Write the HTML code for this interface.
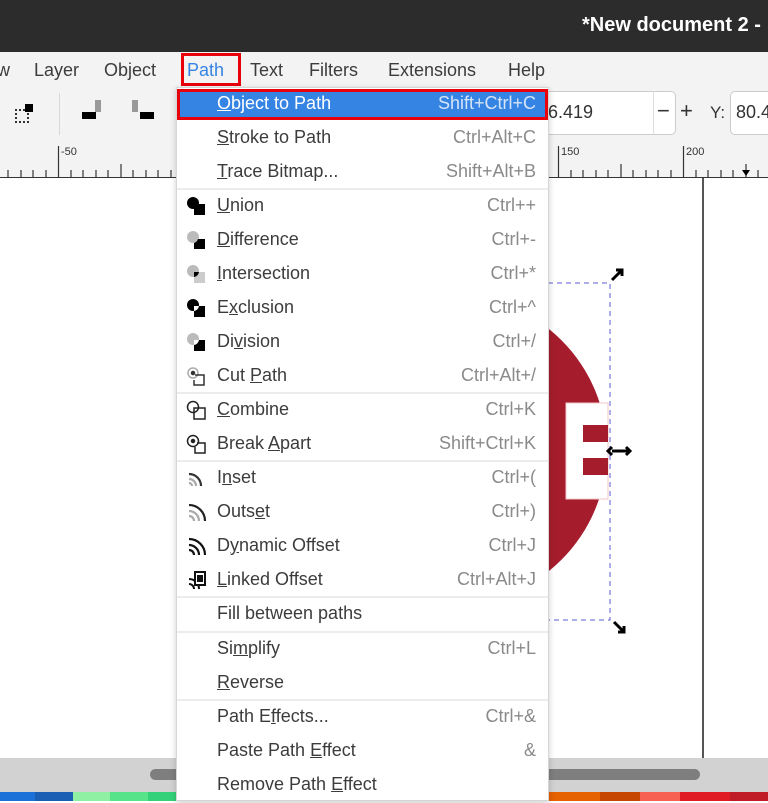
<!DOCTYPE html>
<html><head><meta charset="utf-8"><style>
*{margin:0;padding:0;box-sizing:border-box}
body{width:768px;height:801px;overflow:hidden;position:relative;background:#fff;font-family:"Liberation Sans",sans-serif}
.abs{position:absolute}
#title{left:0;top:0;width:768px;height:52px;background:#2c2c2c}
#title span{position:absolute;left:582px;top:14px;color:#fff;font-weight:bold;font-size:20px;white-space:nowrap}
#menubar{left:0;top:52px;width:768px;height:36px;background:#f3f3f3}
#menubar span{position:absolute;top:8px;font-size:18px;color:#3c3c3c}
#toolbar{left:0;top:88px;width:768px;height:52px;background:#f3f3f3}
#ruler{left:0;top:140px;width:768px;height:38px;background:#f3f3f3;border-bottom:1px solid #333}
.menu{left:176px;top:87px;width:373px;height:714px;background:#fff;border:1px solid #d6d6d6;box-shadow:0 2px 6px rgba(0,0,0,.2)}
.it{position:absolute;left:0;width:371px;height:34px;font-size:18px;color:#3c3c3c}
.it .l{position:absolute;left:40px;top:5px;white-space:nowrap}
.it .r{position:absolute;right:12px;top:5px;color:#8a8a8a;white-space:nowrap}
.it u{text-decoration:underline}
.sep{position:absolute;left:0;width:371px;height:2px;background:#ececec}
.ic{position:absolute;left:9px;top:6px;width:22px;height:22px}
</style></head><body>
<div id="title" class="abs"><span>*New document 2 -</span></div>
<div id="menubar" class="abs">
<span style="left:-3px">w</span><span style="left:34px">Layer</span><span style="left:104px">Object</span>
<span style="left:187px;color:#3584e4">Path</span><span style="left:250px">Text</span><span style="left:309px">Filters</span><span style="left:388px">Extensions</span><span style="left:508px">Help</span>
</div>
<div class="abs" style="left:181px;top:53px;width:60px;height:33px;border:3px solid #e8000b"></div>
<div id="toolbar" class="abs">
<div class="abs" style="left:15px;top:21px;width:14px;height:14px;border:2px dotted #333"></div>
<div class="abs" style="left:25px;top:16px;width:8px;height:8px;background:#000"></div>
<div class="abs" style="left:59px;top:5px;width:1px;height:42px;background:#d8d8d8"></div>
<div class="abs" style="left:95px;top:12px;width:6px;height:12px;background:#999"></div>
<div class="abs" style="left:82px;top:24px;width:14px;height:7px;background:#000"></div>
<div class="abs" style="left:132px;top:12px;width:6px;height:12px;background:#999"></div>
<div class="abs" style="left:140px;top:24px;width:14px;height:7px;background:#000"></div>
<div class="abs" style="left:540px;top:3px;width:136px;height:44px;background:#fff;border:1px solid #ccc;border-radius:5px"></div>
<span class="abs" style="left:548px;top:14px;font-size:18px;color:#333">6.419</span>
<div class="abs" style="left:653px;top:3px;width:1px;height:44px;background:#ddd"></div>
<span class="abs" style="left:657px;top:10px;font-size:22px;color:#333">−</span>
<span class="abs" style="left:680px;top:10px;font-size:22px;color:#333">+</span>
<span class="abs" style="left:710px;top:15px;font-size:17px;color:#333">Y:</span>
<div class="abs" style="left:730px;top:3px;width:50px;height:44px;background:#fff;border:1px solid #ccc;border-radius:5px"></div>
<span class="abs" style="left:736px;top:14px;font-size:18px;color:#333">80.4</span>
</div>
<div id="ruler" class="abs">
<svg width="768" height="38" class="abs" style="left:0;top:0">
<g stroke="#333" stroke-width="1.2">
<line x1="58.5" y1="6" x2="58.5" y2="37"/><line x1="558.5" y1="6" x2="558.5" y2="37"/><line x1="683.5" y1="6" x2="683.5" y2="37"/>
<line x1="8" y1="30" x2="8" y2="37"/><line x1="21" y1="30" x2="21" y2="37"/><line x1="33" y1="30" x2="33" y2="37"/><line x1="46" y1="30" x2="46" y2="37"/>
<line x1="71" y1="30" x2="71" y2="37"/><line x1="83" y1="30" x2="83" y2="37"/><line x1="96" y1="30" x2="96" y2="37"/><line x1="108" y1="30" x2="108" y2="37"/><line x1="121" y1="24" x2="121" y2="37"/><line x1="133" y1="30" x2="133" y2="37"/><line x1="146" y1="30" x2="146" y2="37"/><line x1="158" y1="30" x2="158" y2="37"/><line x1="171" y1="30" x2="171" y2="37"/>
<line x1="571" y1="30" x2="571" y2="37"/><line x1="583" y1="30" x2="583" y2="37"/><line x1="596" y1="30" x2="596" y2="37"/><line x1="608" y1="30" x2="608" y2="37"/><line x1="621" y1="24" x2="621" y2="37"/><line x1="633" y1="30" x2="633" y2="37"/><line x1="646" y1="30" x2="646" y2="37"/><line x1="658" y1="30" x2="658" y2="37"/><line x1="671" y1="30" x2="671" y2="37"/>
<line x1="696" y1="30" x2="696" y2="37"/><line x1="708" y1="30" x2="708" y2="37"/><line x1="721" y1="30" x2="721" y2="37"/><line x1="733" y1="30" x2="733" y2="37"/><line x1="746" y1="24" x2="746" y2="37"/><line x1="758" y1="30" x2="758" y2="37"/>
</g>
<g font-size="11" fill="#333" font-family="Liberation Sans"><text x="61" y="15">-50</text><text x="561" y="15">150</text><text x="686" y="15">200</text></g>
<polygon points="742,30 750,30 746,36" fill="#000"/>
</svg>
</div>
<svg class="abs" style="left:0;top:178px" width="768" height="580">
<circle cx="452" cy="272" r="155" fill="#a51d2d"/>
<rect x="548" y="225" width="20" height="96" fill="#a51d2d"/>
<rect x="566" y="225" width="42" height="96" fill="#fff" stroke="#f4c7c7"/>
<rect x="583" y="247" width="25" height="17" fill="#a51d2d"/>
<rect x="583" y="280" width="25" height="17" fill="#a51d2d"/>
<rect x="548" y="105" width="62" height="337" fill="none" stroke="#5b5bd6" stroke-dasharray="5,4"/>
<line x1="703" y1="0" x2="703" y2="580" stroke="#555" stroke-width="2"/>
<path d="M612 102 l10 -10 m-6 0 h6 v6" stroke="#000" stroke-width="3" fill="none"/>
<path d="M612 273 h18 m-4 -4 l4 4 -4 4 m-14 -8 l-4 4 4 4" stroke="#000" stroke-width="3" fill="none"/>
<path d="M614 444 l10 10 m0 -6 v6 h-6" stroke="#000" stroke-width="3" fill="none"/>
</svg>
<div class="abs" style="left:0;top:758px;width:768px;height:34px;background:#d2d2d2"></div>
<div class="abs" style="left:150px;top:769px;width:550px;height:11px;background:#7e7e7e;border-radius:6px"></div>
<div class="abs" style="left:0;top:792px;width:768px;height:9px;background:linear-gradient(90deg,#1c71d8 0 35px,#1a5fb4 35px 73px,#8ff0a4 73px 110px,#57e389 110px 148px,#33d17a 148px 176px,#fff 176px 549px,#e66100 549px 600px,#c64600 600px 640px,#f66151 640px 680px,#e01b24 680px 730px,#c01c28 730px)"></div>

<div class="menu abs">
<div class="abs" style="left:0;top:1px;width:371px;height:31px;background:#3584e4;border:3px solid #e8000b"></div>
<div class="it" style="top:0"><span class="l" style="color:#fff"><u>O</u>bject to Path</span><span class="r" style="color:#d6e4f7">Shift+Ctrl+C</span></div>
<div class="it" style="top:34px"><span class="l"><u>S</u>troke to Path</span><span class="r">Ctrl+Alt+C</span></div>
<div class="it" style="top:68px"><span class="l"><u>T</u>race Bitmap...</span><span class="r">Shift+Alt+B</span></div>
<div class="sep" style="top:100px"></div>
<div class="it" style="top:102px"><svg class="ic" viewBox="0 0 22 22"><circle cx="7" cy="7" r="6"/><rect x="8" y="8" width="11" height="11"/></svg><span class="l"><u>U</u>nion</span><span class="r">Ctrl++</span></div>
<div class="it" style="top:136px"><svg class="ic" viewBox="0 0 22 22"><circle cx="7" cy="7" r="6" fill="#bbb"/><path d="M12 9h7v10H8v-6a6 6 0 0 0 4-4z"/></svg><span class="l"><u>D</u>ifference</span><span class="r">Ctrl+-</span></div>
<div class="it" style="top:170px"><svg class="ic" viewBox="0 0 22 22"><circle cx="7" cy="7" r="6" fill="#bbb"/><rect x="8" y="8" width="11" height="11" fill="#ccc"/><path d="M8 8h5a6 6 0 0 1-5 5z"/></svg><span class="l"><u>I</u>ntersection</span><span class="r">Ctrl+*</span></div>
<div class="it" style="top:204px"><svg class="ic" viewBox="0 0 22 22"><circle cx="7" cy="7" r="6"/><rect x="8" y="8" width="11" height="11"/><path d="M8 8h5a6 6 0 0 1-5 5z" fill="#fff"/></svg><span class="l">E<u>x</u>clusion</span><span class="r">Ctrl+^</span></div>
<div class="it" style="top:238px"><svg class="ic" viewBox="0 0 22 22"><circle cx="7" cy="7" r="6" fill="#bbb"/><rect x="8" y="8" width="11" height="11"/><path d="M8 8h5a6 6 0 0 1-5 5z" fill="#fff"/></svg><span class="l">Di<u>v</u>ision</span><span class="r">Ctrl+/</span></div>
<div class="it" style="top:272px"><svg class="ic" viewBox="0 0 22 22" fill="none" stroke="#333" stroke-width="1.5"><circle cx="7" cy="7" r="5" stroke="#aaa"/><path d="M9 9h9v10H8v-5"/><circle cx="7" cy="7" r="1.5" fill="#333"/></svg><span class="l">Cut <u>P</u>ath</span><span class="r">Ctrl+Alt+/</span></div>
<div class="sep" style="top:304px"></div>
<div class="it" style="top:306px"><svg class="ic" viewBox="0 0 22 22" fill="none" stroke="#222" stroke-width="1.5"><circle cx="7" cy="7" r="5.5"/><rect x="8" y="8" width="11" height="11"/></svg><span class="l"><u>C</u>ombine</span><span class="r">Ctrl+K</span></div>
<div class="it" style="top:340px"><svg class="ic" viewBox="0 0 22 22" fill="none" stroke="#222" stroke-width="1.5"><circle cx="7" cy="7" r="5.5"/><path d="M11 9h8v10H9v-6"/><circle cx="7" cy="7" r="1.5" fill="#222"/></svg><span class="l">Break <u>A</u>part</span><span class="r">Shift+Ctrl+K</span></div>
<div class="sep" style="top:372px"></div>
<div class="it" style="top:374px"><svg class="ic" viewBox="0 0 22 22" fill="none" stroke-width="2.2"><path d="M3 6a12 12 0 0 1 12 12" stroke="#333"/><path d="M3 11a7 7 0 0 1 7 7" stroke="#aaa"/><path d="M3 15a3 3 0 0 1 3 3" stroke="#aaa"/></svg><span class="l">I<u>n</u>set</span><span class="r">Ctrl+(</span></div>
<div class="it" style="top:408px"><svg class="ic" viewBox="0 0 22 22" fill="none" stroke-width="2.2"><path d="M3 3a16 16 0 0 1 16 16" stroke="#222"/><path d="M3 9a10 10 0 0 1 10 10" stroke="#aaa"/><path d="M3 14a5 5 0 0 1 5 5" stroke="#aaa"/></svg><span class="l">Outs<u>e</u>t</span><span class="r">Ctrl+)</span></div>
<div class="it" style="top:442px"><svg class="ic" viewBox="0 0 22 22" fill="none" stroke="#111" stroke-width="2.2"><path d="M3 3a16 16 0 0 1 16 16"/><path d="M3 9a10 10 0 0 1 10 10"/><path d="M3 14a5 5 0 0 1 5 5"/></svg><span class="l">D<u>y</u>namic Offset</span><span class="r">Ctrl+J</span></div>
<div class="it" style="top:476px"><svg class="ic" viewBox="0 0 22 22" fill="none" stroke="#111" stroke-width="2"><path d="M3 9a10 10 0 0 1 10 10"/><path d="M3 14a5 5 0 0 1 5 5"/><rect x="9" y="2" width="10" height="13" fill="#fff"/><rect x="12" y="6" width="4" height="5" fill="#111"/></svg><span class="l"><u>L</u>inked Offset</span><span class="r">Ctrl+Alt+J</span></div>
<div class="sep" style="top:508px"></div>
<div class="it" style="top:510px"><span class="l">Fill between paths</span></div>
<div class="sep" style="top:543px"></div>
<div class="it" style="top:545px"><span class="l">Si<u>m</u>plify</span><span class="r">Ctrl+L</span></div>
<div class="it" style="top:579px"><span class="l"><u>R</u>everse</span></div>
<div class="sep" style="top:611px"></div>
<div class="it" style="top:613px"><span class="l">Path E<u>f</u>fects...</span><span class="r">Ctrl+&amp;</span></div>
<div class="it" style="top:647px"><span class="l">Paste Path <u>E</u>ffect</span><span class="r">&amp;</span></div>
<div class="it" style="top:681px"><span class="l">Remove Path <u>E</u>ffect</span></div>
</div>
</body></html>
